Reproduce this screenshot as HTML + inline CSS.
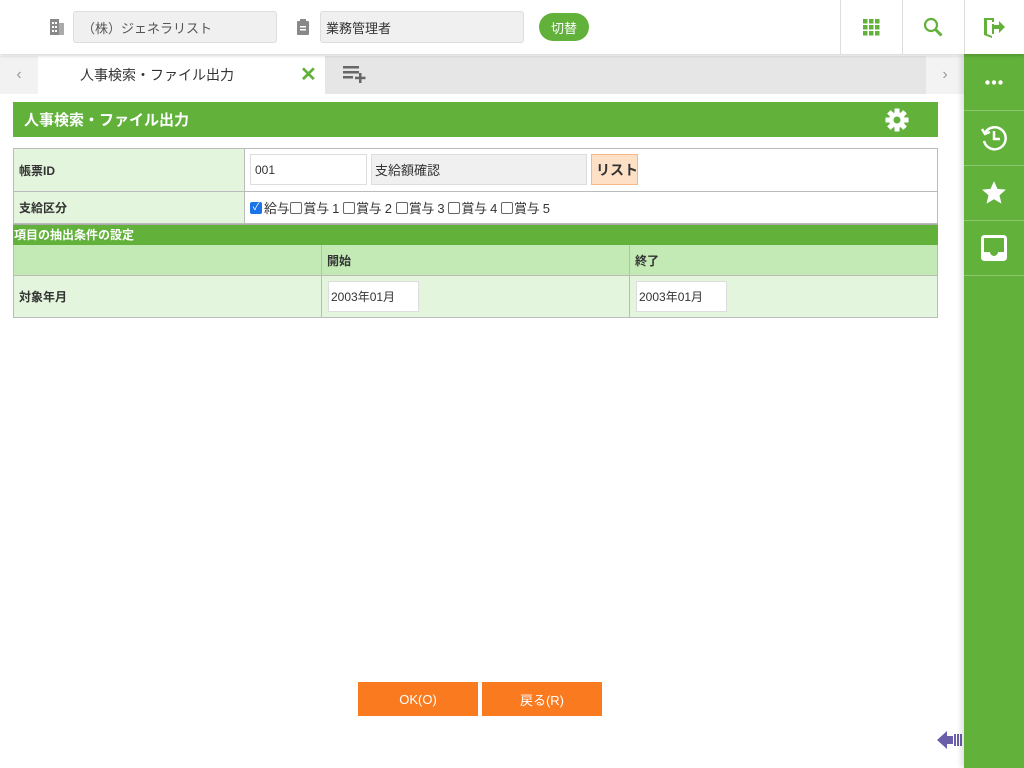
<!DOCTYPE html>
<html><head><meta charset="utf-8"><style>
*{box-sizing:border-box;margin:0;padding:0}
body{width:1024px;height:768px;position:relative;overflow:hidden;background:#fff;font-family:"Liberation Sans","Noto Sans CJK JP",sans-serif;color:#333}
.abs{position:absolute}
.g{background:#62b13b}
.box{position:absolute;border:1px solid #ddd;background:#fff;font-size:12px;padding-left:5px;display:flex;align-items:center;white-space:nowrap}
.cell{position:absolute;border-right:1px solid #bbb;border-bottom:1px solid #bbb;font-size:12px;font-weight:bold;display:flex;align-items:center;padding-left:5px;white-space:nowrap}
.lg{background:#e3f5dc}.mg{background:#c3eab5}
.sb{position:absolute;left:964px;width:60px;height:55px;border-bottom:1px solid #8bc96f;display:flex;align-items:center;justify-content:center}
.cb{display:inline-block;width:12px;height:12px;border:1px solid #666;border-radius:2px;margin:0 1px 0 1px;vertical-align:-1px}
</style></head><body>
<div class="abs" style="left:0;top:0;width:1024px;height:54px;background:#fff;box-shadow:0 2px 3px rgba(0,0,0,.15);z-index:2">
 <svg class="abs" style="left:50px;top:19px" width="14" height="16"><rect x="0" y="0" width="9" height="16" fill="#888"/><rect x="9" y="4" width="5" height="12" fill="#aaa"/><g fill="#fff"><rect x="2" y="3" width="2" height="2"/><rect x="5" y="3" width="2" height="2"/><rect x="2" y="7" width="2" height="2"/><rect x="5" y="7" width="2" height="2"/><rect x="2" y="11" width="2" height="2"/><rect x="5" y="11" width="2" height="2"/></g></svg>
 <div class="box" style="left:73px;top:11px;width:204px;height:32px;background:#f0f0f0;border-radius:3px;padding-left:8px;font-size:13px;color:#555">（株）ジェネラリスト</div>
 <svg class="abs" style="left:297px;top:19px" width="12" height="16"><rect x="0" y="2" width="12" height="14" rx="1" fill="#888"/><rect x="3" y="0" width="6" height="4" fill="#888"/><g fill="#fff"><rect x="3" y="7" width="6" height="1.5"/><rect x="3" y="10" width="6" height="1.5"/></g></svg>
 <div class="box" style="left:320px;top:11px;width:204px;height:32px;background:#f0f0f0;border-radius:3px;font-size:13px;color:#333">業務管理者</div>
 <div class="abs g" style="left:539px;top:13px;width:50px;height:28px;border-radius:14px;color:#fff;font-size:13px;display:flex;align-items:center;justify-content:center">切替</div>
 <div class="abs" style="left:840px;top:0;width:1px;height:54px;background:#ddd"></div>
 <div class="abs" style="left:902px;top:0;width:1px;height:54px;background:#ddd"></div>
 <div class="abs" style="left:964px;top:0;width:1px;height:54px;background:#ddd"></div>
 <svg class="abs" style="left:863px;top:19px" width="17" height="17" fill="#62b13b"><rect x="0" y="0" width="4.5" height="4.5"/><rect x="6" y="0" width="4.5" height="4.5"/><rect x="12" y="0" width="4.5" height="4.5"/><rect x="0" y="6" width="4.5" height="4.5"/><rect x="6" y="6" width="4.5" height="4.5"/><rect x="12" y="6" width="4.5" height="4.5"/><rect x="0" y="12" width="4.5" height="4.5"/><rect x="6" y="12" width="4.5" height="4.5"/><rect x="12" y="12" width="4.5" height="4.5"/></svg>
 <svg class="abs" style="left:923px;top:17px" width="20" height="20"><circle cx="8" cy="8" r="6" fill="none" stroke="#62b13b" stroke-width="2.2"/><line x1="12.5" y1="12.5" x2="18.5" y2="18.5" stroke="#62b13b" stroke-width="3"/></svg>
 <svg class="abs" style="left:984px;top:16px" width="22" height="22" fill="#62b13b"><path d="M0 2h10v4H8V4H3v14l5 2V8h2v10H8v4L0 19z"/><path d="M10 9h5V5l6 6-6 6v-4h-5z"/></svg>
</div>
<div class="abs" style="left:0;top:56px;width:38px;height:38px;background:#f2f2f2;color:#999;font-size:16px;display:flex;align-items:center;justify-content:center">‹</div>
<div class="abs" style="left:38px;top:56px;width:287px;height:38px;background:#fff;font-size:14px;color:#333;padding-left:42px;display:flex;align-items:center">人事検索・ファイル出力</div>
<div class="abs" style="left:300px;top:62px;color:#62b13b;font-size:20px;font-weight:bold">✕</div>
<div class="abs" style="left:325px;top:56px;width:601px;height:38px;background:#e6e6e6"></div>
<svg class="abs" style="left:343px;top:66px" width="25" height="17" fill="#666"><rect x="0" y="0" width="16" height="2.5"/><rect x="0" y="5" width="16" height="2.5"/><rect x="0" y="10" width="10" height="2.5"/><rect x="16" y="7" width="2.5" height="10"/><rect x="12" y="10.7" width="10.5" height="2.5"/></svg>
<div class="abs" style="left:926px;top:56px;width:38px;height:38px;background:#f3f3f3;color:#999;font-size:16px;display:flex;align-items:center;justify-content:center">›</div>
<div class="abs g" style="left:13px;top:102px;width:925px;height:35px;color:#fff;font-size:15px;font-weight:bold;padding-left:11px;display:flex;align-items:center">人事検索・ファイル出力</div>
<svg class="abs" style="left:885px;top:108px" width="24" height="24" viewBox="0 0 24 24"><g fill="#fff"><circle cx="12" cy="12" r="8"/><rect x="9.5" y="0.5" width="5" height="5"/><rect x="9.5" y="18.5" width="5" height="5"/><rect x="0.5" y="9.5" width="5" height="5"/><rect x="18.5" y="9.5" width="5" height="5"/><rect x="9.5" y="0.5" width="5" height="5" transform="rotate(45 12 12)"/><rect x="9.5" y="18.5" width="5" height="5" transform="rotate(45 12 12)"/><rect x="0.5" y="9.5" width="5" height="5" transform="rotate(45 12 12)"/><rect x="18.5" y="9.5" width="5" height="5" transform="rotate(45 12 12)"/></g><circle cx="12" cy="12" r="3.5" fill="#62b13b"/></svg>
<div class="abs" style="left:13px;top:148px;width:925px;height:170px;border-left:1px solid #bbb;border-top:1px solid #bbb"></div>
<div class="cell lg" style="left:14px;top:149px;width:231px;height:43px">帳票ID</div>
<div class="cell" style="left:245px;top:149px;width:693px;height:43px;background:#fff"></div>
<div class="box" style="left:250px;top:154px;width:117px;height:31px;padding-left:4px">001</div>
<div class="box" style="left:371px;top:154px;width:216px;height:31px;background:#f0f0f0;font-size:13px;padding-left:3px">支給額確認</div>
<div class="box" style="left:591px;top:154px;width:47px;height:31px;background:#fde0c6;border-color:#f5b787;font-size:14px;font-weight:bold;color:#333;padding-left:4px">リスト</div>
<div class="cell lg" style="left:14px;top:192px;width:231px;height:32px">支給区分</div>
<div class="cell" style="left:245px;top:192px;width:693px;height:32px;background:#fff;font-weight:normal;font-size:13px;letter-spacing:-0.3px">
<span style="display:inline-block;width:12px;height:12px;background:#1a73e8;border-radius:2px;color:#fff;font-size:10px;line-height:12px;text-align:center;margin-right:2px;vertical-align:-1px">✓</span>給与<span class="cb"></span>賞与 1<span class="cb" style="margin-left:4px"></span>賞与 2<span class="cb" style="margin-left:4px"></span>賞与 3<span class="cb" style="margin-left:4px"></span>賞与 4<span class="cb" style="margin-left:4px"></span>賞与 5</div>
<div class="abs g" style="left:13px;top:224px;width:925px;height:21px;color:#fff;font-size:12px;font-weight:bold;padding-left:1px;line-height:21px;border-top:1px solid #aaa">項目の抽出条件の設定</div>
<div class="cell mg" style="left:14px;top:245px;width:308px;height:31px"></div>
<div class="cell mg" style="left:322px;top:245px;width:308px;height:31px">開始</div>
<div class="cell mg" style="left:630px;top:245px;width:308px;height:31px">終了</div>
<div class="cell lg" style="left:14px;top:276px;width:308px;height:42px">対象年月</div>
<div class="cell lg" style="left:322px;top:276px;width:308px;height:42px"></div>
<div class="cell lg" style="left:630px;top:276px;width:308px;height:42px"></div>
<div class="box" style="left:328px;top:281px;width:91px;height:31px;padding-left:2px">2003年01月</div>
<div class="box" style="left:636px;top:281px;width:91px;height:31px;padding-left:2px">2003年01月</div>
<div class="abs" style="left:358px;top:682px;width:120px;height:34px;background:#fa7a20;color:#fff;font-size:13px;display:flex;align-items:center;justify-content:center">OK(O)</div>
<div class="abs" style="left:482px;top:682px;width:120px;height:34px;background:#fa7a20;color:#fff;font-size:13px;display:flex;align-items:center;justify-content:center">戻る(R)</div>
<svg class="abs" style="left:937px;top:730px" width="26" height="20" fill="#6a5fa8"><path d="M0 10L10 1v5h6v8h-6v5z"/><rect x="17" y="4" width="2" height="12"/><rect x="20" y="4" width="2" height="12"/><rect x="23" y="4" width="2" height="12"/></svg>
<div class="abs g" style="left:964px;top:54px;width:60px;height:714px;box-shadow:-3px 0 5px rgba(0,0,0,.12)"></div>
<div class="sb" style="top:54px;height:57px"><svg width="18" height="5" fill="#fff"><circle cx="2.5" cy="2.5" r="2.2"/><circle cx="9" cy="2.5" r="2.2"/><circle cx="15.5" cy="2.5" r="2.2"/></svg></div>
<div class="sb" style="top:111px"><svg width="28" height="28" viewBox="0 0 28 28" fill="none" stroke="#fff" stroke-width="2.5"><path d="M5 9A11 11 0 1 1 4 17"/><path d="M2 5l3 5 5-2"/><path d="M14 7v8h6"/></svg></div>
<div class="sb" style="top:166px"><svg width="26" height="26" viewBox="0 0 24 24" fill="#fff"><path d="M12 1l3.2 7.2 7.8.7-5.9 5.2 1.8 7.7L12 17.8 5.1 21.8l1.8-7.7L1 8.9l7.8-.7z"/></svg></div>
<div class="sb" style="top:221px"><svg width="26" height="26" viewBox="0 0 26 26"><rect x="1.5" y="1.5" width="23" height="23" rx="2" fill="none" stroke="#fff" stroke-width="3"/><path d="M3 17h6c0 2 2 4 4 4s4-2 4-4h6v6H3z" fill="#fff"/></svg></div>
</body></html>
